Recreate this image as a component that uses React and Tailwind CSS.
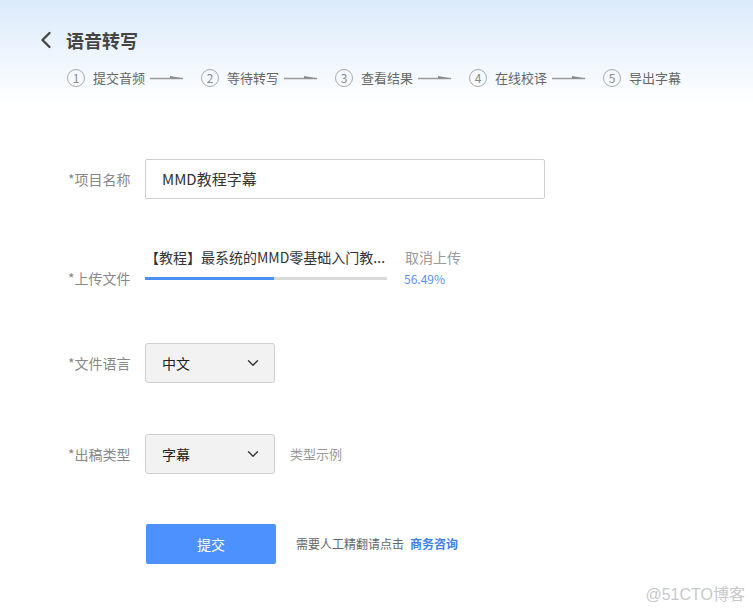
import { ChevronLeft, ChevronDown } from "lucide-react";

const steps = ["提交音频", "等待转写", "查看结果", "在线校译", "导出字幕"];

function Arrow() {
  return (
    <svg width="34" height="8" viewBox="0 0 34 8" className="ml-[5px] mr-[17px]">
      <line x1="0" y1="4.5" x2="33" y2="4.5" stroke="#9a9a9a" strokeWidth="1.5" />
      <polygon points="20,2 34,4.5 20,4.5" fill="#8a8a8a" />
    </svg>
  );
}

function Select({ value }) {
  return (
    <div className="w-[130px] h-[40px] bg-[#f2f2f2] border border-[#cfcfcf] rounded-[3px] flex items-center justify-between pl-4 pr-[12px] text-[14px] text-[#222]">
      <span>{value}</span>
      <ChevronDown size={18} strokeWidth={1.8} className="text-[#333]" />
    </div>
  );
}

export default function App() {
  return (
    <div className="w-[753px] h-[615px] bg-white relative overflow-hidden" style={{ fontFamily: '"Noto Sans CJK SC", "Liberation Sans", sans-serif' }}>
      <div className="h-[105px] bg-gradient-to-b from-[#dbeafb] to-white pl-[32px] pt-[26px]">
        <div className="flex items-center">
          <ChevronLeft size={28} strokeWidth={2} className="text-[#444]" />
          <span className="ml-[6px] text-[18px] font-bold text-[#444] leading-[28px]">语音转写</span>
        </div>
        <div className="flex items-center mt-[14px] ml-[35px]">
          {steps.map((s, i) => (
            <div key={s} className="flex items-center">
              <div className="w-[18px] h-[18px] rounded-full border border-[#aaa] flex items-center justify-center text-[12px] text-[#888] leading-none">{i + 1}</div>
              <span className="ml-[8px] text-[13px] text-[#666]">{s}</span>
              {i < steps.length - 1 && <Arrow />}
            </div>
          ))}
        </div>
      </div>

      <div className="pl-[68px] text-[14px]">
        <div className="flex items-center mt-[54px]">
          <span className="w-[77px] text-[#888]">*项目名称</span>
          <div className="w-[400px] h-[40px] border border-[#cfcfcf] rounded-[2px] flex items-center pl-4 text-[15px] text-[#333]">MMD教程字幕</div>
        </div>

        <div className="flex items-end mt-[48px]">
          <span className="w-[77px] text-[#888] leading-[20px]">*上传文件</span>
          <div className="flex flex-col">
            <div className="flex items-center">
              <span className="w-[260px] text-[#333] whitespace-nowrap">【教程】最系统的MMD零基础入门教...</span>
              <span className="text-[#999]">取消上传</span>
            </div>
            <div className="flex items-start mt-[2px]">
              <div className="w-[242px] h-[3px] bg-[#d9d9d9] mt-[7px]">
                <div className="h-[3px] bg-[#4a90f5]" style={{ width: "53.5%" }} />
              </div>
              <span className="ml-[17px] text-[12px] text-[#5b8ff9] leading-[18px]">56.49%</span>
            </div>
          </div>
        </div>

        <div className="flex items-center mt-[55px]">
          <span className="w-[77px] text-[#888]">*文件语言</span>
          <Select value="中文" />
        </div>

        <div className="flex items-center mt-[51px]">
          <span className="w-[77px] text-[#888]">*出稿类型</span>
          <Select value="字幕" />
          <span className="ml-[15px] text-[13px] text-[#999]">类型示例</span>
        </div>

        <div className="flex items-center mt-[50px] ml-[78px]">
          <button className="w-[130px] h-[40px] bg-[#4c91fd] rounded-[2px] text-white text-[14px]">提交</button>
          <span className="ml-[20px] text-[12px] text-[#666]">需要人工精翻请点击</span>
          <span className="ml-[6px] text-[12px] font-bold text-[#3d82f0]">商务咨询</span>
        </div>
      </div>

      <div className="absolute right-[8px] bottom-[8px] text-[16px] text-[#c8c8c8]"><span style={{ fontFamily: '"Liberation Sans", sans-serif' }}>@51CTO</span>博客</div>
    </div>
  );
}
